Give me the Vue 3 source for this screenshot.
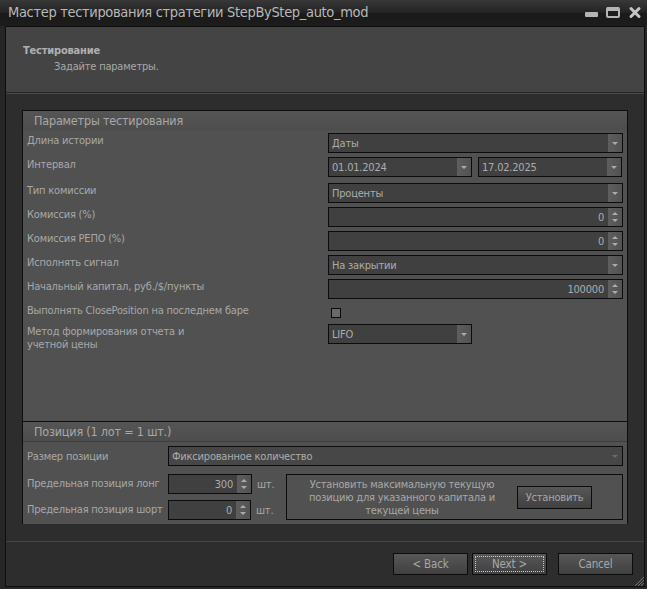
<template>
  <div class="window">
    <!-- Заголовок окна -->
    <div class="titlebar">
      <span class="title">Мастер тестирования стратегии StepByStep_auto_mod</span>
      <div class="win-buttons">
        <svg width="14" height="14" viewBox="0 0 14 14"><rect x="1" y="7" width="13" height="5" rx="1" fill="#b4b4b4" /></svg>
        <svg width="14" height="14" viewBox="0 0 14 14"><rect x="1" y="3" width="12" height="9" rx="1" fill="#1c1c1c" stroke="#b4b4b4" stroke-width="2" /><rect x="1" y="2" width="12" height="4" fill="#b4b4b4" /></svg>
        <svg width="14" height="14" viewBox="0 0 14 14"><path d="M3 3.5 L11 11.5 M11 3.5 L3 11.5" stroke="#c4c4c4" stroke-width="3" stroke-linecap="round" /></svg>
      </div>
    </div>

    <div class="frame">
      <div class="page-header">
        <div class="page-title">Тестирование</div>
        <div class="page-subtitle">Задайте параметры.</div>
      </div>

      <div class="page-body">
        <div class="panel">
          <!-- Параметры тестирования -->
          <section class="group group-main">
            <h3 class="group-title">Параметры тестирования</h3>
            <div class="rows">
              <div v-for="row in rows" :key="row.label" class="row" :class="row.cls">
                <label class="row-label">{{ row.label }}</label>
                <div class="row-controls">
                  <template v-for="c in row.controls" :key="c.text">
                    <div class="field" :class="[c.kind, c.size]">
                      <span class="field-value">{{ c.text }}</span>
                      <span v-if="c.kind === 'combo'" class="side"><i class="arrow-down"></i></span>
                      <span v-else class="side"><i class="arrow-up"></i><i class="arrow-down"></i></span>
                    </div>
                  </template>
                  <div v-if="row.check" class="checkbox"></div>
                </div>
              </div>
            </div>
          </section>

          <!-- Позиция -->
          <section class="group group-pos">
            <h3 class="group-title">Позиция (1 лот = 1 шт.)</h3>
            <div class="pos-size">
              <label class="pos-label">Размер позиции</label>
              <div class="field combo disabled">
                <span class="field-value">Фиксированное количество</span>
                <span class="side"><i class="arrow-down"></i></span>
              </div>
            </div>
            <div class="pos-limits">
              <div class="limits">
                <div class="limit">
                  <label class="pos-label">Предельная позиция лонг</label>
                  <div class="field spin limit-long">
                    <span class="field-value">300</span>
                    <span class="side"><i class="arrow-up"></i><i class="arrow-down"></i></span>
                  </div>
                  <span class="unit">шт.</span>
                </div>
                <div class="limit">
                  <label class="pos-label">Предельная позиция шорт</label>
                  <div class="field spin limit-short">
                    <span class="field-value">0</span>
                    <span class="side"><i class="arrow-up"></i><i class="arrow-down"></i></span>
                  </div>
                  <span class="unit">шт.</span>
                </div>
              </div>
              <div class="max-box">
                <p class="max-text">Установить максимальную текущую позицию для указанного капитала и текущей цены</p>
                <button class="btn btn-set">Установить</button>
              </div>
            </div>
          </section>
        </div>
      </div>

      <div class="page-footer">
        <button class="btn btn-nav">&lt; Back</button>
        <button class="btn btn-nav btn-default"><span class="focus">Next &gt;</span></button>
        <button class="btn btn-nav btn-cancel">Cancel</button>
        <svg class="grip" width="10" height="10" viewBox="0 0 10 10">
          <path d="M10 1 L1 10 M10 4 L4 10 M10 7 L7 10" stroke="#777" stroke-width="1" />
        </svg>
      </div>
    </div>
  </div>
</template>

<script setup>
const rows = [
  { label: 'Длина истории', controls: [{ kind: 'combo', text: 'Даты' }] },
  {
    label: 'Интервал',
    controls: [
      { kind: 'combo', size: 'half', text: '01.01.2024' },
      { kind: 'combo', size: 'half', text: '17.02.2025' }
    ]
  },
  { label: 'Тип комиссии', cls: 'gap-6', controls: [{ kind: 'combo', text: 'Проценты' }] },
  { label: 'Комиссия (%)', controls: [{ kind: 'spin', text: '0' }] },
  { label: 'Комиссия РЕПО (%)', controls: [{ kind: 'spin', text: '0' }] },
  { label: 'Исполнять сигнал', controls: [{ kind: 'combo', text: 'На закрытии' }] },
  { label: 'Начальный капитал, руб./$/пункты', controls: [{ kind: 'spin', text: '100000' }] },
  { label: 'Выполнять ClosePosition на последнем баре', cls: 'row-check', check: true, controls: [] },
  {
    label: 'Метод формирования отчета и учетной цены',
    cls: 'row-method',
    controls: [{ kind: 'combo', size: 'half', text: 'LIFO' }]
  }
]
</script>

<style>
html, body {
  margin: 0;
  background: #1e1e1e;
}
</style>

<style scoped>
.window {
  width: 647px;
  height: 589px;
  display: flex;
  flex-direction: column;
  box-sizing: border-box;
  background: #262626;
  font-family: "DejaVu Sans Condensed", "DejaVu Sans", sans-serif;
  font-stretch: condensed;
  font-size: 11px;
  letter-spacing: -0.2px;
  color: #a8a8a8;
  overflow: hidden;
}

.titlebar {
  height: 26px;
  flex: none;
  box-sizing: border-box;
  display: flex;
  align-items: center;
  justify-content: space-between;
  padding: 0 5px 2px 8px;
  background: linear-gradient(#383838, #222 50%, #1a1a1a 50%, #1c1c1c);
}

.title {
  font-size: 14.5px;
  letter-spacing: -0.33px;
  color: #b8b8b8;
  white-space: nowrap;
}

.win-buttons {
  display: flex;
  gap: 8px;
}

.frame {
  flex: 1;
  margin: 0 2px 2px 5px;
  border: 1px solid #0e0e0e;
  display: flex;
  flex-direction: column;
  min-height: 0;
  background: #2d2d2d;
}

.page-header {
  height: 66px;
  flex: none;
  box-sizing: border-box;
  padding-top: 17px;
  background: #444;
  border-bottom: 1px solid #262626;
  box-shadow: 0 1px 0 #4a4a4a;
}

.page-title {
  margin-left: 17px;
  font-weight: 700;
  line-height: 14px;
  color: #b0b0b0;
}

.page-subtitle {
  margin-left: 48px;
  margin-top: 2px;
  line-height: 14px;
}

.page-body {
  flex: 1;
  min-height: 0;
  padding: 17px 16px 17px;
  display: flex;
  border-bottom: 1px solid #444;
}

.panel {
  flex: 1;
  display: flex;
  flex-direction: column;
  background: #515151;
  border: 1px solid #0e0e0e;
  border-bottom: none;
}

.group-title {
  margin: 0;
  height: 19px;
  padding-left: 11px;
  font-size: 12.5px;
  letter-spacing: -0.2px;
  font-weight: 400;
  line-height: 20px;
  color: #a8a8a8;
  background: linear-gradient(#555, #4d4d4d);
}

.group-main {
  flex: 1;
}

.group-pos {
  flex: none;
  height: 102px;
  border-top: 1px solid #0e0e0e;
}

.group-pos .group-title {
  border-bottom: 1px solid #3e3e3e;
}

.rows {
  padding-top: 3px;
}

.row {
  display: flex;
  margin-bottom: 4px;
}

.row.gap-6 {
  margin-top: 6px;
}

.row-label {
  width: 305px;
  flex: none;
  box-sizing: border-box;
  padding: 1px 0 0 4px;
  line-height: 14px;
}

.row-controls {
  flex: 1;
  display: flex;
  gap: 6px;
  padding-right: 4px;
}

.row-check {
  margin-top: 9px;
  height: 10px;
  margin-bottom: 6px;
}

.row-check .row-label {
  margin-top: -5px;
}

.row-method .row-label {
  padding: 1px 130px 0 4px;
  line-height: 13px;
}

.field {
  height: 20px;
  flex: 1;
  box-sizing: border-box;
  display: flex;
  border: 1px solid #0c0c0c;
  background: #404040;
  color: #acacac;
}

.field.half {
  flex: none;
  width: 144px;
}

.field-value {
  flex: 1;
  padding: 0 3px;
  line-height: 20px;
  white-space: nowrap;
}

.spin .field-value {
  text-align: right;
  padding-right: 4px;
}

.side {
  width: 14px;
  flex: none;
  display: flex;
  flex-direction: column;
  align-items: center;
  justify-content: center;
  gap: 4px;
  background: linear-gradient(90deg, #5e5e5e, #525252);
}

.arrow-down,
.arrow-up {
  width: 0;
  height: 0;
  border-left: 3.5px solid transparent;
  border-right: 3.5px solid transparent;
}

.arrow-down {
  border-top: 3px solid #ababab;
}

.arrow-up {
  border-bottom: 3px solid #ababab;
}

.checkbox {
  width: 10px;
  height: 10px;
  margin-left: 3px;
  box-sizing: border-box;
  border: 1px solid #0c0c0c;
  background: #6a6a6a;
}

.field.disabled {
  background: #474747;
}

.field.disabled .side {
  background: none;
}

.field.disabled .arrow-down {
  border-top-color: #6a6a6a;
}

.pos-size {
  display: flex;
  margin: 4px 4px 0 0;
}

.pos-label {
  width: 145px;
  flex: none;
  box-sizing: border-box;
  padding-left: 4px;
  line-height: 20px;
  white-space: nowrap;
}

.pos-size .pos-label {
  line-height: 22px;
}

.pos-limits {
  display: flex;
  margin: 6px 4px 0 0;
}

.limits {
  flex: none;
  display: flex;
  flex-direction: column;
  gap: 6px;
  width: 263px;
}

.limit {
  display: flex;
  align-items: center;
}

.limit-long {
  flex: none;
  width: 84px;
}

.limit-short {
  flex: none;
  width: 83px;
}

.unit {
  margin-left: 5px;
}

.max-box {
  flex: 1;
  height: 46px;
  box-sizing: border-box;
  border: 1px solid #0c0c0c;
  display: flex;
  align-items: center;
  padding-right: 30px;
}

.max-text {
  margin: 0;
  width: 230px;
  flex: none;
  line-height: 13px;
  text-align: center;
}

.btn {
  font: inherit;
  letter-spacing: inherit;
  color: #a8a8a8;
  border: 1px solid #0c0c0c;
  background: linear-gradient(#575757, #404040);
  padding: 0;
  box-sizing: border-box;
}

.btn-set {
  width: 75px;
  height: 23px;
  margin-left: auto;
}

.page-footer {
  height: 44px;
  flex: none;
  box-sizing: border-box;
  display: flex;
  justify-content: flex-end;
  padding: 11px 11px 0 0;
  gap: 4px;
  position: relative;
}

.btn-nav {
  width: 75px;
  height: 22px;
  font-size: 11.5px;
}

.btn-cancel {
  margin-left: 7px;
}

.focus {
  display: block;
  margin: 2px;
  height: 16px;
  line-height: 14px;
  box-sizing: border-box;
  border: 1px dotted #c8c8c8;
}

.grip {
  position: absolute;
  right: 0;
  bottom: 0;
}
</style>
